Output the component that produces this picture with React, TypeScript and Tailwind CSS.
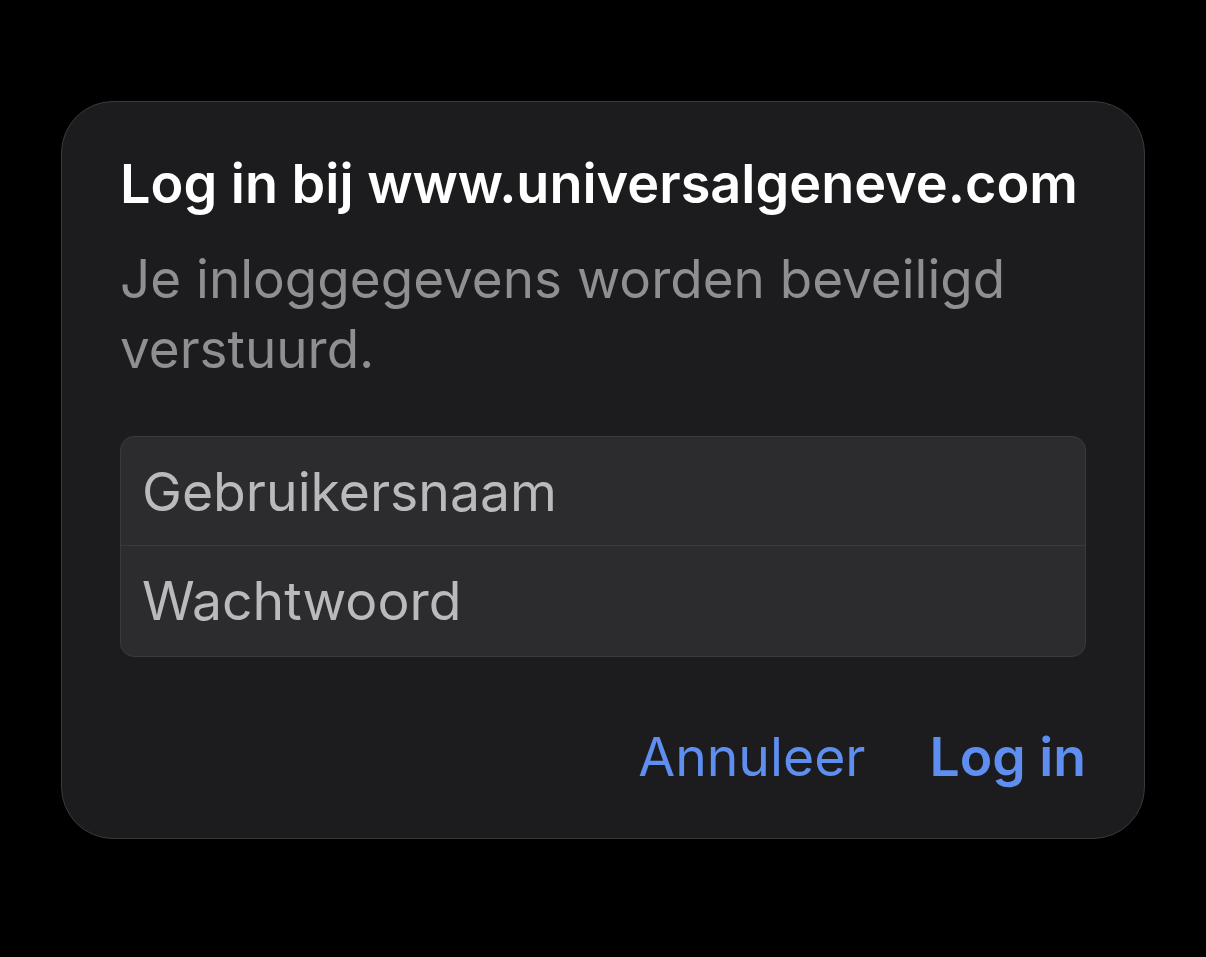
import * as React from "react";

export default function App() {
  return (
    <div
      className="min-h-[957px] w-full bg-black pt-[101px] pl-[61px]"
      style={{ fontFamily: "Inter, 'Noto Sans', sans-serif" }}
    >
      <div className="w-[1084px] rounded-[52px] border border-[#3a3a3c] bg-[#1c1c1e] px-[58px] pt-[52px] pb-[51px]">
        <h1 className="text-[54px] font-semibold leading-[60px] text-white">
          Log in bij www.universalgeneve.com
        </h1>
        <p className="mt-[30px] text-[53px] leading-[70px] text-[#8e8e93]">
          Je inloggegevens worden beveiligd verstuurd.
        </p>
        <div className="mt-[52px] overflow-hidden rounded-[14px] border border-[#3a3a3c] bg-[#2c2c2e]">
          <div className="h-[109px] border-b border-[#3a3a3c] px-[21px] text-[53.5px] leading-[110px] text-[#b9b9be]">
            Gebruikersnaam
          </div>
          <div className="h-[110px] px-[21px] text-[53.5px] leading-[110px] text-[#b9b9be]">
            Wachtwoord
          </div>
        </div>
        <div className="mt-[70px] flex justify-end gap-[64px] text-[53.5px] leading-[60px] text-[#5e8ff0]">
          <button className="font-normal">Annuleer</button>
          <button className="font-semibold">Log in</button>
        </div>
      </div>
    </div>
  );
}
